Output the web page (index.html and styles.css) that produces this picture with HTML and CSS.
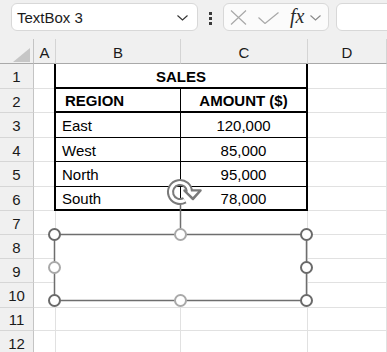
FILE: index.html
```html
<!DOCTYPE html>
<html>
<head>
<meta charset="utf-8">
<link rel="stylesheet" href="styles.css">
</head>
<body>
<div class="app">
  <div class="fbar">
    <div class="namebox">
      <span class="name">TextBox 3</span>
      <svg class="chev" width="11" height="6" viewBox="0 0 11 6"><path d="M0.5 0.5 L5.5 5 L10.5 0.5" fill="none" stroke="#333" stroke-width="1.1"/></svg>
    </div>
    <div class="dots"><i></i><i></i><i></i></div>
    <div class="fxbox">
      <svg class="ico-x" width="17" height="15" viewBox="0 0 17 15"><path d="M1 0.5 L16 14.5 M16 0.5 L1 14.5" stroke="#a8a8a8" stroke-width="1.2" fill="none"/></svg>
      <svg class="ico-ok" width="21" height="12" viewBox="0 0 21 12"><path d="M0.5 5.5 L7 11.5 L20.5 0.5" stroke="#a8a8a8" stroke-width="1.2" fill="none"/></svg>
      <span class="fx">fx</span>
      <svg class="chev2" width="11" height="6" viewBox="0 0 11 6"><path d="M0.5 0.5 L5.5 5 L10.5 0.5" fill="none" stroke="#888" stroke-width="1.1"/></svg>
    </div>
    <div class="formula"></div>
  </div>

  <div class="sheet">
    <div class="hd corner"><span class="tri"></span></div>
    <div class="hd col">A</div>
    <div class="hd col">B</div>
    <div class="hd col">C</div>
    <div class="hd col">D</div>

    <div class="tbl">
      <div class="tc title">SALES</div>
      <div class="tc bold lft ind hb">REGION</div>
      <div class="tc bold ctr hb">AMOUNT ($)</div>
      <div class="tc lft">East</div>
      <div class="tc ctr">120,000</div>
      <div class="tc lft">West</div>
      <div class="tc ctr">85,000</div>
      <div class="tc lft">North</div>
      <div class="tc ctr">95,000</div>
      <div class="tc lft last">South</div>
      <div class="tc ctr last">78,000</div>
    </div>

    <div class="rh">1</div><div class="c"></div><div class="c"></div>
    <div class="rh">2</div><div class="c"></div><div class="c"></div>
    <div class="rh">3</div><div class="c"></div><div class="c"></div>
    <div class="rh">4</div><div class="c"></div><div class="c"></div>
    <div class="rh">5</div><div class="c"></div><div class="c"></div>
    <div class="rh">6</div><div class="c"></div><div class="c"></div>
    <div class="rh">7</div><div class="c"></div><div class="c"></div><div class="c"></div><div class="c"></div>
    <div class="rh">8</div><div class="c"></div><div class="c"></div><div class="c"></div><div class="c"></div>
    <div class="rh">9</div><div class="c"></div><div class="c"></div><div class="c"></div><div class="c"></div>
    <div class="rh">10</div><div class="c"></div><div class="c"></div><div class="c"></div><div class="c"></div>
    <div class="rh">11</div><div class="c"></div><div class="c"></div><div class="c"></div><div class="c"></div>
    <div class="rh">12</div><div class="c"></div><div class="c"></div><div class="c"></div><div class="c"></div>

    <svg class="overlay" width="387" height="313" viewBox="0 39 387 313">
      <rect x="54.5" y="234.5" width="252" height="66" fill="#fff" stroke="#6e6e6e" stroke-width="1.5"/>
      <line x1="180.5" y1="204" x2="180.5" y2="229" stroke="#6e6e6e" stroke-width="1.5"/>
      <g class="rot">
        <path d="M184.75 200.23 A9.5 9.5 0 1 1 189.5 192" fill="none" stroke="#7a7a7a" stroke-width="7"/>
        <polygon points="184.5,190.5 200.5,190.5 193,199" fill="#7a7a7a" stroke="#7a7a7a" stroke-width="2.5" stroke-linejoin="round"/>
        <path d="M184.75 200.23 A9.5 9.5 0 1 1 189.5 192" fill="none" stroke="#fff" stroke-width="3"/>
        <polygon points="187,191.5 198,191.5 192.8,197" fill="#fff"/>
      </g>
      <g fill="#fff" stroke-width="2">
        <circle cx="54.5" cy="234.5" r="5.5" stroke="#6a6a6a"/>
        <circle cx="180.5" cy="234.5" r="5.5" stroke="#a9a9a9"/>
        <circle cx="306.5" cy="234.5" r="5.5" stroke="#6a6a6a"/>
        <circle cx="54.5" cy="267.5" r="5.5" stroke="#a9a9a9"/>
        <circle cx="306.5" cy="267.5" r="5.5" stroke="#6a6a6a"/>
        <circle cx="54.5" cy="300.5" r="5.5" stroke="#6a6a6a"/>
        <circle cx="180.5" cy="300.5" r="5.5" stroke="#a9a9a9"/>
        <circle cx="306.5" cy="300.5" r="5.5" stroke="#6a6a6a"/>
      </g>
    </svg>
  </div>
</div>
</body>
</html>
```

FILE: styles.css
```css
html, body {
  margin: 0;
  padding: 0;
  background: #fff;
}
body {
  font-family: "Liberation Sans", Arial, sans-serif;
  color: #000;
}
.app {
  width: 387px;
  height: 352px;
  overflow: hidden;
}

/* formula bar */
.fbar {
  height: 39px;
  box-sizing: border-box;
  padding-top: 3px;
  background: #f0f0f0;
  display: flex;
  align-items: flex-start;
}
.fbar > * {
  flex-shrink: 0;
}
.namebox {
  margin-left: 11px;
  width: 187px;
  height: 28px;
  box-sizing: border-box;
  background: #fff;
  border: 1px solid #d8d8d8;
  border-radius: 6px;
  display: flex;
  align-items: center;
  justify-content: space-between;
  padding: 0 9px 0 5px;
  font-size: 15px;
  color: #1b1b1b;
}
.namebox .chev {
  margin-top: 1px;
}
.dots {
  margin-left: 11px;
  padding-top: 9px;
  display: flex;
  flex-direction: column;
  gap: 2px;
}
.dots i {
  display: block;
  width: 3px;
  height: 3px;
  background: #3a3a3a;
}
.fxbox {
  margin-left: 11px;
  width: 106px;
  height: 28px;
  box-sizing: border-box;
  background: #fbfbfb;
  border: 1px solid #d8d8d8;
  border-radius: 6px;
  display: flex;
  align-items: center;
  padding-left: 6px;
}
.ico-x { margin-top: 1px; }
.ico-ok { margin-left: 11px; margin-top: 2px; }
.fx {
  margin-left: 11px;
  font-family: "Liberation Serif", "Times New Roman", serif;
  font-style: italic;
  font-size: 20px;
  color: #2a2a2a;
  line-height: 20px;
  margin-top: -2px;
}
.chev2 { margin-left: 6px; margin-top: 2px; }
.formula {
  margin-left: 7px;
  width: 70px;
  height: 28px;
  box-sizing: border-box;
  background: #fff;
  border: 1px solid #d8d8d8;
  border-radius: 6px;
}

/* sheet */
.sheet {
  position: relative;
  display: grid;
  grid-template-columns: 34px 22px 125px 127px 79px;
  grid-template-rows: 25px 25px 24px 25px 24px 25px 24px 24px 24px 24px 25px 23px 24px;
  font-size: 15px;
}
.hd {
  background: #f0f0f0;
  border-bottom: 1px solid #a9a9a9;
  border-right: 1px solid #d4d4d4;
  box-sizing: border-box;
  display: flex;
  align-items: center;
  justify-content: center;
  padding-top: 2px;
  color: #1a1a1a;
}
.hd.corner {
  border-right: 1px solid #c4c4c4;
  position: relative;
}
.tri {
  position: absolute;
  right: 3px;
  bottom: 1px;
  width: 0;
  height: 0;
  border-left: 17px solid transparent;
  border-bottom: 14px solid #c6c6c6;
}
.rh {
  background: #f0f0f0;
  border-right: 1px solid #c4c4c4;
  border-bottom: 1px solid #d6d6d6;
  box-sizing: border-box;
  display: flex;
  align-items: center;
  justify-content: center;
  padding-top: 1px;
  color: #1a1a1a;
}
.c {
  border-right: 1px solid #e1e1e1;
  border-bottom: 1px solid #e1e1e1;
  box-sizing: border-box;
}

/* sales table */
.tbl {
  grid-column: 3 / 5;
  grid-row: 2 / 8;
  margin-left: -2px;
  background: #fff;
  border-left: 2px solid #000;
  border-right: 2px solid #000;
  border-bottom: 2px solid #000;
  display: grid;
  grid-template-columns: 125px 1fr;
  grid-template-rows: 25px 24px 25px 24px 25px 22px;
  position: relative;
  z-index: 1;
}
.tc {
  box-sizing: border-box;
  display: flex;
  align-items: center;
  padding-top: 1px;
  border-bottom: 1px solid #000;
  white-space: nowrap;
}
.tc.lft {
  border-right: 1px solid #000;
  padding-left: 6px;
}
.tc.ind { padding-left: 9px; }
.tc.ctr { justify-content: center; }
.tc.bold { font-weight: bold; }
.tc.hb { border-bottom-width: 2px; }
.tc.title {
  grid-column: 1 / 3;
  justify-content: center;
  font-weight: bold;
  border-bottom: 2px solid #000;
}
.tc.last { border-bottom: none; }

.overlay {
  position: absolute;
  left: 0;
  top: 0;
  z-index: 2;
  pointer-events: none;
}
```
